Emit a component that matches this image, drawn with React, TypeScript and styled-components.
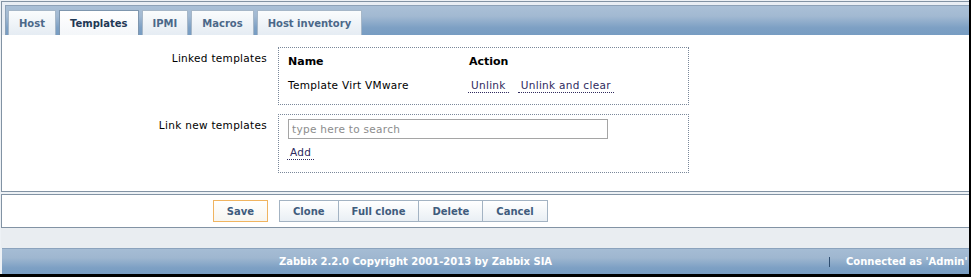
import React from "react"
import styled, { createGlobalStyle } from "styled-components"

const GlobalStyle = createGlobalStyle`
    body {
        margin: 0;
        background: #fff;
        font-family: "DejaVu Sans", Verdana, sans-serif;
        font-size: 10.5px;
        letter-spacing: 0.3px;
        color: #000;
    }
`

const Frame = styled.div`
    width: 971px;
    height: 277px;
    box-sizing: border-box;
    padding: 1px 0 0 1px;
    border-right: 2px solid #000;
    border-bottom: 3px solid #000;
    background: #edf1f5;
    display: flex;
    flex-direction: column;
    overflow: hidden;
`

const FormPanel = styled.div`
    border: 1px solid #8293a4;
    border-right: none;
    background: #fff;
`

const TabStrip = styled.div`
    padding: 3px 0 0 3px;
    background: #e9eef4;
`

const TabNav = styled.div`
    height: 30px;
    box-sizing: border-box;
    border-top: 1px solid #8da2b8;
    border-left: 1px solid #8da2b8;
    padding: 4px 0 0 2px;
    display: flex;
    align-items: flex-end;
    gap: 3px;
    background: linear-gradient(#aac0d7 0%, #a2b9d2 35%, #7da0c4 75%, #779cc2 100%);
`

const Tab = styled.div<{ $active?: boolean }>`
    height: 25px;
    box-sizing: border-box;
    padding: 0 10px;
    line-height: 26px;
    font-size: 10px;
    font-weight: bold;
    letter-spacing: 0;
    white-space: nowrap;
    color: ${(p) => (p.$active ? "#1f3855" : "#4b6889")};
    border: 1px solid ${(p) => (p.$active ? "#7e96ae" : "#a6b7c8")};
    border-bottom: none;
    background: ${(p) =>
        p.$active
            ? "linear-gradient(#ffffff, #f3f6f9)"
            : "linear-gradient(#fafcfd, #e5ecf3)"};
`

const TabContent = styled.div`
    padding: 12px 0 18px 0;
`

const FormGrid = styled.div`
    display: grid;
    grid-template-columns: 265px 411px;
    column-gap: 11px;
    row-gap: 9px;
`

const Label = styled.div`
    text-align: right;
    padding-top: 4px;
    line-height: 14px;
    white-space: nowrap;
`

const DottedBox = styled.div`
    border: 1px dotted #7a889a;
`

const LinkedBox = styled(DottedBox)`
    padding: 7px 9px 11px 9px;
    display: grid;
    grid-template-columns: 181px auto;
    row-gap: 9px;
    line-height: 14px;
`

const HeadCell = styled.div`
    font-weight: bold;
    font-size: 11px;
    letter-spacing: 0;
`

const Cell = styled.div`
    white-space: nowrap;
`

const ActionLink = styled.a`
    display: inline-block;
    line-height: 14px;
    padding: 0 3px;
    margin-left: -1px;
    margin-right: 10px;
    color: #2f2a5e;
    text-decoration: none;
    border-bottom: 1px dotted #2f2a5e;
    cursor: pointer;
`

const SearchBox = styled(DottedBox)`
    padding: 4px 9px 12px 9px;
`

const SearchInput = styled.input`
    display: block;
    width: 320px;
    height: 20px;
    box-sizing: border-box;
    margin: 0 0 6px 0;
    padding: 0 3px;
    border: 1px solid #a5a5a5;
    font-family: "DejaVu Sans", Verdana, sans-serif;
    font-size: 10.5px;
    letter-spacing: 0.3px;
    outline: none;

    &::placeholder {
        color: #8c8c8c;
    }
`

const ButtonPanel = styled.div`
    margin-top: 2px;
    border: 1px solid #8293a4;
    border-right: none;
    background: #fff;
    padding: 5px 0;
    display: grid;
    grid-template-columns: 266px auto;
    column-gap: 11px;
`

const SaveCell = styled.div`
    display: flex;
    justify-content: flex-end;
`

const ButtonGroup = styled.div`
    display: flex;
`

const Button = styled.button<{ $primary?: boolean }>`
    height: 22px;
    box-sizing: border-box;
    padding: 0 13px;
    font-family: "DejaVu Sans", Verdana, sans-serif;
    font-size: 10px;
    font-weight: bold;
    letter-spacing: 0;
    color: #3f5c7d;
    border: 1px solid ${(p) => (p.$primary ? "#f0b460" : "#a3b3c3")};
    background: ${(p) =>
        p.$primary
            ? "linear-gradient(#ffffff, #f7f5f0)"
            : "linear-gradient(#ffffff, #e9eff4)"};
    cursor: pointer;

    & + & {
        margin-left: -1px;
    }
`

const GrayBand = styled.div`
    height: 20px;
    background: #e9edf1;
`

const Footer = styled.div`
    margin-left: 1px;
    height: 26px;
    box-sizing: border-box;
    border-top: 1px solid #8ba3bd;
    display: flex;
    align-items: center;
    background: linear-gradient(#a5bcd4 0%, #9fb7d0 35%, #7da0c4 75%, #789dc2 100%);
    color: #fff;
    font-size: 10px;
    font-weight: bold;
    letter-spacing: 0;
    white-space: nowrap;
`

const FooterMain = styled.div`
    flex: 1;
    text-align: center;
`

const FooterUser = styled.div`
    width: 140px;
    box-sizing: border-box;
    height: 10px;
    line-height: 10px;
    padding-left: 16px;
    border-left: 1px solid #2e4d70;
`

const tabs = ["Host", "Templates", "IPMI", "Macros", "Host inventory"]

export default function App() {
    return (
        <>
            <GlobalStyle />
            <Frame>
                <FormPanel>
                    <TabStrip>
                        <TabNav>
                            {tabs.map((t) => (
                                <Tab key={t} $active={t === "Templates"}>
                                    {t}
                                </Tab>
                            ))}
                        </TabNav>
                    </TabStrip>
                    <TabContent>
                        <FormGrid>
                            <Label>Linked templates</Label>
                            <LinkedBox>
                                <HeadCell>Name</HeadCell>
                                <HeadCell>Action</HeadCell>
                                <Cell>Template Virt VMware</Cell>
                                <Cell>
                                    <ActionLink>Unlink</ActionLink>
                                    <ActionLink>Unlink and clear</ActionLink>
                                </Cell>
                            </LinkedBox>
                            <Label>Link new templates</Label>
                            <SearchBox>
                                <SearchInput placeholder="type here to search" />
                                <ActionLink>Add</ActionLink>
                            </SearchBox>
                        </FormGrid>
                    </TabContent>
                </FormPanel>
                <ButtonPanel>
                    <SaveCell>
                        <Button $primary>Save</Button>
                    </SaveCell>
                    <ButtonGroup>
                        <Button>Clone</Button>
                        <Button>Full clone</Button>
                        <Button>Delete</Button>
                        <Button>Cancel</Button>
                    </ButtonGroup>
                </ButtonPanel>
                <GrayBand />
                <Footer>
                    <FooterMain>Zabbix 2.2.0 Copyright 2001-2013 by Zabbix SIA</FooterMain>
                    <FooterUser>Connected as 'Admin'</FooterUser>
                </Footer>
            </Frame>
        </>
    )
}
